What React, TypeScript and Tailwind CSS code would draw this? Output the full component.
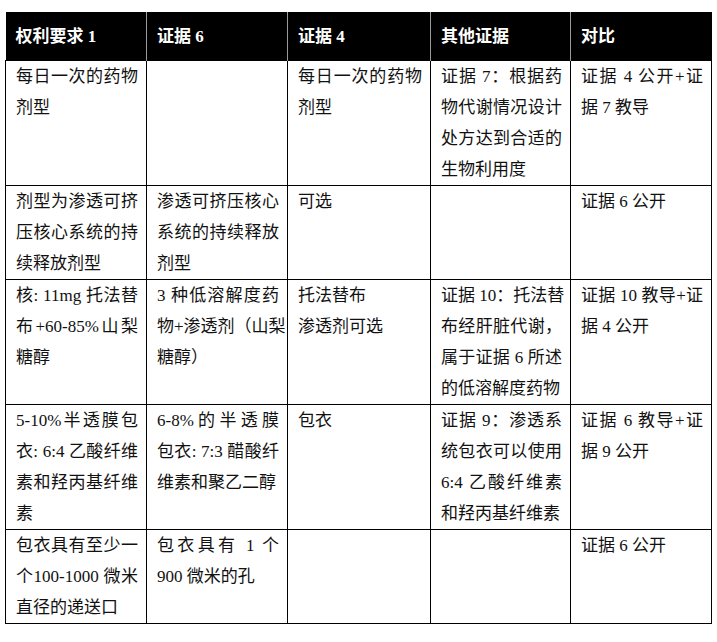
import React from "react";

type Para = string[];
type Cell = Para[];

const headers = ["权利要求 1", "证据 6", "证据 4", "其他证据", "对比"];

const rows: Cell[][] = [
  [
    [["每日一次的药物", "剂型"]],
    [],
    [["每日一次的药物", "剂型"]],
    [["证据 7：根据药", "物代谢情况设计", "处方达到合适的", "生物利用度"]],
    [["证据 4 公开+证", "据 7 教导"]],
  ],
  [
    [["剂型为渗透可挤", "压核心系统的持", "续释放剂型"]],
    [["渗透可挤压核心", "系统的持续释放", "剂型"]],
    [["可选"]],
    [],
    [["证据 6 公开"]],
  ],
  [
    [["核: 11mg 托法替", "布+60-85%山梨", "糖醇"]],
    [["3 种低溶解度药", "物+渗透剂（山梨", "糖醇）"]],
    [["托法替布"], ["渗透剂可选"]],
    [["证据 10：托法替", "布经肝脏代谢，", "属于证据 6 所述", "的低溶解度药物"]],
    [["证据 10 教导+证", "据 4 公开"]],
  ],
  [
    [["5-10%半透膜包", "衣: 6:4 乙酸纤维", "素和羟丙基纤维", "素"]],
    [["6-8%的半透膜", "包衣: 7:3 醋酸纤", "维素和聚乙二醇"]],
    [["包衣"]],
    [["证据 9：渗透系", "统包衣可以使用", "6:4 乙酸纤维素", "和羟丙基纤维素"]],
    [["证据 6 教导+证", "据 9 公开"]],
  ],
  [
    [["包衣具有至少一", "个100-1000 微米", "直径的递送口"]],
    [["包衣具有 1 个", "900 微米的孔"]],
    [],
    [],
    [["证据 6 公开"]],
  ],
];

const widths = ["w-[141px]", "w-[141px]", "w-[143px]", "w-[140px]", "w-[141px]"];

function CellBody({ cell }: { cell: Cell }) {
  return (
    <>
      {cell.map((para, pi) =>
        para.map((line, li) => {
          const justify = li < para.length - 1;
          return (
            <div
              key={`${pi}-${li}`}
              className={
                justify
                  ? "h-[31px] leading-[31px] whitespace-nowrap text-justify [text-align-last:justify]"
                  : "h-[31px] leading-[31px] whitespace-nowrap text-left"
              }
            >
              {line}
            </div>
          );
        })
      )}
    </>
  );
}

export default function App() {
  return (
    <div className="bg-white w-[717px] h-[642px] pt-[12px] pl-[5px] font-['Liberation_Serif','Noto_Sans_CJK_SC',serif] text-[17px] text-[#111]">
      <table className="border-collapse table-fixed w-[706px]">
        <colgroup>
          {widths.map((w, i) => (
            <col key={i} className={w} />
          ))}
        </colgroup>
        <thead>
          <tr className="h-[48px] bg-black">
            {headers.map((h, i) => (
              <th
                key={i}
                className={
                  "pl-[10px] pr-[8px] pt-[2px] text-left align-middle font-bold text-white text-[17px] border-black " +
                  (i < headers.length - 1 ? "border-r border-r-[#9a9a9a]" : "")
                }
              >
                {h}
              </th>
            ))}
          </tr>
        </thead>
        <tbody>
          {rows.map((row, ri) => (
            <tr key={ri}>
              {row.map((cell, ci) => (
                <td
                  key={ci}
                  className="border border-black align-top pl-[10px] pr-[8px] py-0"
                >
                  <CellBody cell={cell} />
                </td>
              ))}
            </tr>
          ))}
        </tbody>
      </table>
    </div>
  );
}
